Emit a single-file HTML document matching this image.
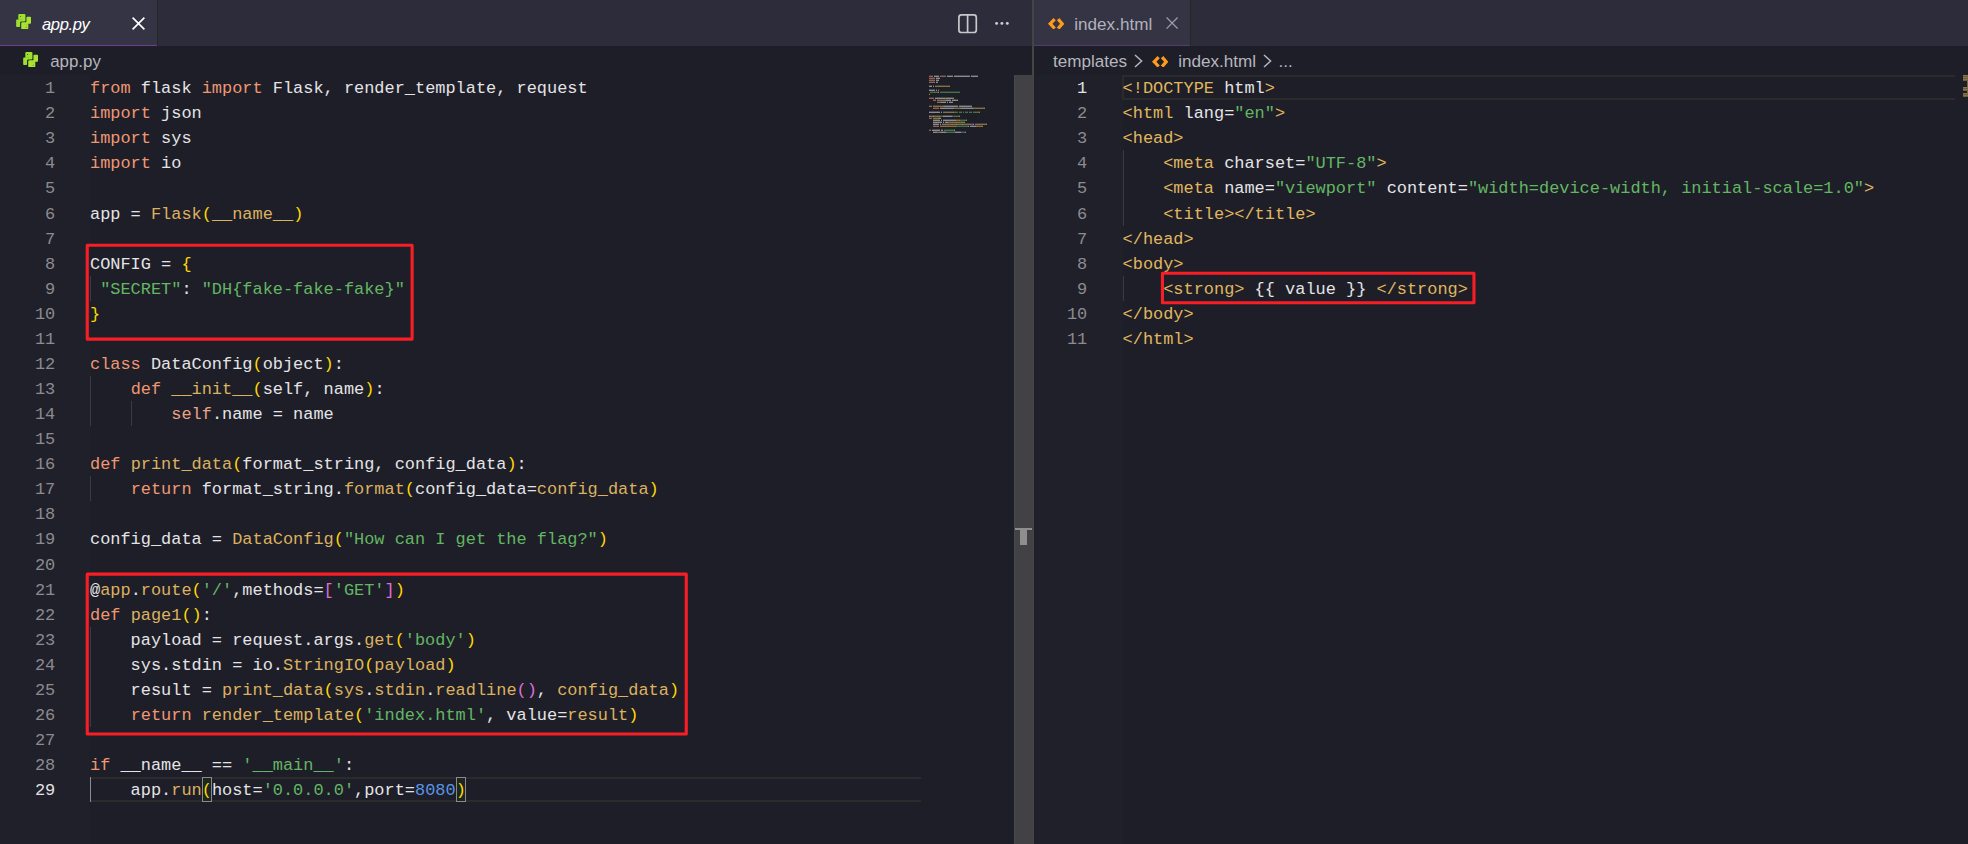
<!DOCTYPE html>
<html lang="en"><head><meta charset="utf-8"><title>editor</title>
<style>
*{margin:0;padding:0;box-sizing:border-box}
html,body{width:1968px;height:844px;overflow:hidden;background:#1e1e28}
body{position:relative;font-family:"Liberation Sans",sans-serif}
.abs{position:absolute}
.cl,.ln{position:absolute;height:25.07px;line-height:25.07px;font-family:"Liberation Mono",monospace;font-size:16.93px;white-space:pre}
.cl{padding-top:1px}
.ln{width:60px;text-align:right;color:#8b8b90;padding-top:1px}
.ln.act{color:#e2e2e4}
.gd{position:absolute;width:1.3px}
.p{color:#e4e4e6}
.k{color:#ee9872}
.f{color:#dcb15f}
.s{color:#63b663}
.n{color:#5a95e3}
.a{color:#ffd700}
.b{color:#da70d6}
.t{color:#e0b75f}
.v{color:#eba287}

.ui{position:absolute;font-size:17.1px;white-space:pre;line-height:20px}
.red{position:absolute;border:3.3px solid #fb1f27}
</style></head>
<body>
<div class="abs" style="left:0;top:0;width:1968px;height:46.2px;background:#2d2c3b"></div>
<div class="abs" style="left:0;top:75.2px;width:90px;height:770px;background:#20202a"></div>
<div class="abs" style="left:1034px;top:75.2px;width:88.6px;height:770px;background:#20202a"></div>
<div class="abs" style="left:0;top:0;width:157px;height:45px;background:#353445"></div>
<div class="abs" style="left:0;top:44.8px;width:157px;height:1.4px;background:#733b96"></div>
<div class="abs" style="left:157px;top:0;width:1.2px;height:46.2px;background:#262629"></div>
<svg class="abs" style="left:15.8px;top:13.8px" width="15.3" height="15.3" viewBox="0 0 460 460"><path d="M100 0H256Q284 0 284 28V198Q284 222 260 222H160Q122 222 122 262V370Q122 392 100 392H30Q5 392 5 367V195Q5 165 35 165H70V30Q70 0 100 0Z M140 61a14 14 0 1 0 0.1 0Z" fill="#9fe02d" fill-rule="evenodd"/><path d="M314 110Q314 85 339 85H425Q455 85 455 115V260Q455 290 425 290H370V425Q370 455 340 455H187Q157 455 157 425V278Q157 248 187 248H288Q314 248 314 222Z M305 381a13 13 0 1 0 0.1 0Z" fill="#a9e52f" fill-rule="evenodd"/><path d="M70 158H195V170H70Z M255 305H370V317H255Z" fill="#7cbf22"/></svg>
<div class="ui" style="left:42px;top:15px;font-style:italic;font-size:16.6px;letter-spacing:-0.4px;color:#ffffff">app.py</div>
<svg class="abs" style="left:132.3px;top:17.2px" width="13" height="13" viewBox="0 0 13 13"><path d="M0.6 0.6 L12.4 12.4 M12.4 0.6 L0.6 12.4" fill="none" stroke="#ffffff" stroke-width="1.6"/></svg>
<svg class="abs" style="left:957px;top:12.7px" width="21" height="21" viewBox="0 0 21 21"><rect x="1.9" y="1.9" width="17.4" height="17.6" rx="2.6" fill="none" stroke="#c8c8cc" stroke-width="1.7"/><path d="M10.6 2 V19.4" stroke="#c8c8cc" stroke-width="1.7"/></svg>
<svg class="abs" style="left:994px;top:21px" width="16" height="5" viewBox="0 0 16 5"><circle cx="2.6" cy="2.4" r="1.45" fill="#d0d0d4"/><circle cx="7.9" cy="2.4" r="1.45" fill="#d0d0d4"/><circle cx="13.3" cy="2.4" r="1.45" fill="#d0d0d4"/></svg>
<svg class="abs" style="left:22.9px;top:52.0px" width="15.3" height="15.3" viewBox="0 0 460 460"><path d="M100 0H256Q284 0 284 28V198Q284 222 260 222H160Q122 222 122 262V370Q122 392 100 392H30Q5 392 5 367V195Q5 165 35 165H70V30Q70 0 100 0Z M140 61a14 14 0 1 0 0.1 0Z" fill="#9fe02d" fill-rule="evenodd"/><path d="M314 110Q314 85 339 85H425Q455 85 455 115V260Q455 290 425 290H370V425Q370 455 340 455H187Q157 455 157 425V278Q157 248 187 248H288Q314 248 314 222Z M305 381a13 13 0 1 0 0.1 0Z" fill="#a9e52f" fill-rule="evenodd"/><path d="M70 158H195V170H70Z M255 305H370V317H255Z" fill="#7cbf22"/></svg>
<div class="ui" style="left:50.2px;top:52.4px;font-size:16.9px;color:#b6b6be">app.py</div>
<div class="abs" style="left:1034px;top:0;width:156px;height:45px;background:#353445"></div>
<div class="abs" style="left:1034px;top:44.8px;width:156px;height:1.4px;background:#573a72"></div>
<div class="abs" style="left:1190px;top:0;width:1.2px;height:46.2px;background:#262629"></div>
<svg class="abs" style="left:1048.0px;top:17.7px" width="16.4" height="11.6" viewBox="0 0 16.4 11.6"><polygon points="0,5.86 5.5,0 7.8,2.13 4.44,5.86 7.8,9.41 5.5,11.55" fill="#ff9b1c"/><polygon points="16.34,5.86 11.37,0 8.88,2.13 12.08,5.86 8.88,9.41 11.37,11.55" fill="#ff9b1c"/></svg>
<div class="ui" style="left:1074.3px;top:14.9px;color:#b2b2ba">index.html</div>
<svg class="abs" style="left:1166px;top:17.4px" width="12.2" height="12.2" viewBox="0 0 13 13"><path d="M0.6 0.6 L12.4 12.4 M12.4 0.6 L0.6 12.4" fill="none" stroke="#9c9ca6" stroke-width="1.4"/></svg>
<div class="ui" style="left:1053px;top:52.4px;color:#b6b6be">templates</div>
<svg class="abs" style="left:1134px;top:54px" width="9" height="14" viewBox="0 0 9 14"><path d="M1 1 L7.6 7 L1 13" fill="none" stroke="#b4b4bc" stroke-width="1.5"/></svg>
<svg class="abs" style="left:1151.6px;top:55.7px" width="16.4" height="11.6" viewBox="0 0 16.4 11.6"><polygon points="0,5.86 5.5,0 7.8,2.13 4.44,5.86 7.8,9.41 5.5,11.55" fill="#ff9b1c"/><polygon points="16.34,5.86 11.37,0 8.88,2.13 12.08,5.86 8.88,9.41 11.37,11.55" fill="#ff9b1c"/></svg>
<div class="ui" style="left:1178.2px;top:52.4px;color:#b6b6be">index.html</div>
<svg class="abs" style="left:1263.4px;top:54px" width="9" height="14" viewBox="0 0 9 14"><path d="M1 1 L7.6 7 L1 13" fill="none" stroke="#b4b4bc" stroke-width="1.5"/></svg>
<div class="ui" style="left:1278.5px;top:52.4px;color:#b6b6be">...</div>
<div class="abs" style="left:90px;top:776.96px;width:831px;height:25.27px;border-top:2px solid #2b2b2c;border-bottom:2px solid #2b2b2c"></div>
<div class="abs" style="left:1122px;top:75.00px;width:833px;height:25.27px;border:2px solid #2b2b2c;border-right:none"></div>
<div class="gd" style="left:90.0px;top:275.76px;height:25.07px;background:#3a3a45"></div>
<div class="gd" style="left:90.0px;top:376.04px;height:50.14px;background:#3a3a45"></div>
<div class="gd" style="left:130.6px;top:401.11px;height:25.07px;background:#3a3a45"></div>
<div class="gd" style="left:90.0px;top:476.32px;height:25.07px;background:#3a3a45"></div>
<div class="gd" style="left:90.0px;top:626.74px;height:100.28px;background:#3a3a45"></div>
<div class="gd" style="left:90.0px;top:777.16px;height:25.07px;background:#8c8c8c"></div>
<div class="gd" style="left:1122.6px;top:150.41px;height:75.21px;background:#3a3a45"></div>
<div class="gd" style="left:1122.6px;top:275.76px;height:25.07px;background:#3a3a45"></div>
<div class="abs" style="left:201.8px;top:776.96px;width:10.4px;height:25.27px;border:1.2px solid #8a8a8a;background:#1c2722"></div>
<div class="abs" style="left:455.8px;top:776.96px;width:10.4px;height:25.27px;border:1.2px solid #8a8a8a;background:#1c2722"></div>
<div class="ln" style="top:75.20px;left:-4.8px">1</div>
<div class="cl" style="top:75.20px;left:90.0px"><span class="k">from</span><span class="p"> flask </span><span class="k">import</span><span class="p"> Flask, render_template, request</span></div>
<div class="ln" style="top:100.27px;left:-4.8px">2</div>
<div class="cl" style="top:100.27px;left:90.0px"><span class="k">import</span><span class="p"> json</span></div>
<div class="ln" style="top:125.34px;left:-4.8px">3</div>
<div class="cl" style="top:125.34px;left:90.0px"><span class="k">import</span><span class="p"> sys</span></div>
<div class="ln" style="top:150.41px;left:-4.8px">4</div>
<div class="cl" style="top:150.41px;left:90.0px"><span class="k">import</span><span class="p"> io</span></div>
<div class="ln" style="top:175.48px;left:-4.8px">5</div>
<div class="ln" style="top:200.55px;left:-4.8px">6</div>
<div class="cl" style="top:200.55px;left:90.0px"><span class="p">app = </span><span class="f">Flask</span><span class="a">(</span><span class="f">__name__</span><span class="a">)</span></div>
<div class="ln" style="top:225.62px;left:-4.8px">7</div>
<div class="ln" style="top:250.69px;left:-4.8px">8</div>
<div class="cl" style="top:250.69px;left:90.0px"><span class="p">CONFIG = </span><span class="a">{</span></div>
<div class="ln" style="top:275.76px;left:-4.8px">9</div>
<div class="cl" style="top:275.76px;left:90.0px"><span class="p"> </span><span class="s">"SECRET"</span><span class="p">: </span><span class="s">"DH{fake-fake-fake}"</span></div>
<div class="ln" style="top:300.83px;left:-4.8px">10</div>
<div class="cl" style="top:300.83px;left:90.0px"><span class="a">}</span></div>
<div class="ln" style="top:325.90px;left:-4.8px">11</div>
<div class="ln" style="top:350.97px;left:-4.8px">12</div>
<div class="cl" style="top:350.97px;left:90.0px"><span class="k">class</span><span class="p"> DataConfig</span><span class="a">(</span><span class="p">object</span><span class="a">)</span><span class="p">:</span></div>
<div class="ln" style="top:376.04px;left:-4.8px">13</div>
<div class="cl" style="top:376.04px;left:90.0px"><span class="p">    </span><span class="k">def</span><span class="p"> </span><span class="f">__init__</span><span class="a">(</span><span class="p">self, name</span><span class="a">)</span><span class="p">:</span></div>
<div class="ln" style="top:401.11px;left:-4.8px">14</div>
<div class="cl" style="top:401.11px;left:90.0px"><span class="p">        </span><span class="v">self</span><span class="p">.name = name</span></div>
<div class="ln" style="top:426.18px;left:-4.8px">15</div>
<div class="ln" style="top:451.25px;left:-4.8px">16</div>
<div class="cl" style="top:451.25px;left:90.0px"><span class="k">def</span><span class="p"> </span><span class="f">print_data</span><span class="a">(</span><span class="p">format_string, config_data</span><span class="a">)</span><span class="p">:</span></div>
<div class="ln" style="top:476.32px;left:-4.8px">17</div>
<div class="cl" style="top:476.32px;left:90.0px"><span class="p">    </span><span class="k">return</span><span class="p"> format_string.</span><span class="f">format</span><span class="a">(</span><span class="p">config_data=</span><span class="f">config_data</span><span class="a">)</span></div>
<div class="ln" style="top:501.39px;left:-4.8px">18</div>
<div class="ln" style="top:526.46px;left:-4.8px">19</div>
<div class="cl" style="top:526.46px;left:90.0px"><span class="p">config_data = </span><span class="f">DataConfig</span><span class="a">(</span><span class="s">"How can I get the flag?"</span><span class="a">)</span></div>
<div class="ln" style="top:551.53px;left:-4.8px">20</div>
<div class="ln" style="top:576.60px;left:-4.8px">21</div>
<div class="cl" style="top:576.60px;left:90.0px"><span class="p">@</span><span class="f">app</span><span class="p">.</span><span class="f">route</span><span class="a">(</span><span class="s">'/'</span><span class="p">,methods=</span><span class="b">[</span><span class="s">'GET'</span><span class="b">]</span><span class="a">)</span></div>
<div class="ln" style="top:601.67px;left:-4.8px">22</div>
<div class="cl" style="top:601.67px;left:90.0px"><span class="k">def</span><span class="p"> </span><span class="f">page1</span><span class="a">()</span><span class="p">:</span></div>
<div class="ln" style="top:626.74px;left:-4.8px">23</div>
<div class="cl" style="top:626.74px;left:90.0px"><span class="p">    payload = request.args.</span><span class="f">get</span><span class="a">(</span><span class="s">'body'</span><span class="a">)</span></div>
<div class="ln" style="top:651.81px;left:-4.8px">24</div>
<div class="cl" style="top:651.81px;left:90.0px"><span class="p">    sys.stdin = io.</span><span class="f">StringIO</span><span class="a">(</span><span class="f">payload</span><span class="a">)</span></div>
<div class="ln" style="top:676.88px;left:-4.8px">25</div>
<div class="cl" style="top:676.88px;left:90.0px"><span class="p">    result = </span><span class="f">print_data</span><span class="a">(</span><span class="f">sys</span><span class="p">.</span><span class="f">stdin</span><span class="p">.</span><span class="f">readline</span><span class="b">()</span><span class="p">, </span><span class="f">config_data</span><span class="a">)</span></div>
<div class="ln" style="top:701.95px;left:-4.8px">26</div>
<div class="cl" style="top:701.95px;left:90.0px"><span class="p">    </span><span class="k">return</span><span class="p"> </span><span class="f">render_template</span><span class="a">(</span><span class="s">'index.html'</span><span class="p">, value=</span><span class="f">result</span><span class="a">)</span></div>
<div class="ln" style="top:727.02px;left:-4.8px">27</div>
<div class="ln" style="top:752.09px;left:-4.8px">28</div>
<div class="cl" style="top:752.09px;left:90.0px"><span class="k">if</span><span class="p"> __name__ == </span><span class="s">'__main__'</span><span class="p">:</span></div>
<div class="ln act" style="top:777.16px;left:-4.8px">29</div>
<div class="cl" style="top:777.16px;left:90.0px"><span class="p">    app.</span><span class="f">run</span><span class="a">(</span><span class="p">host=</span><span class="s">'0.0.0.0'</span><span class="p">,port=</span><span class="n">8080</span><span class="a">)</span></div>
<div class="ln act" style="top:75.20px;left:1027.2px">1</div>
<div class="cl" style="top:75.20px;left:1122.6px"><span class="t">&lt;!DOCTYPE</span><span class="p"> html</span><span class="t">&gt;</span></div>
<div class="ln" style="top:100.27px;left:1027.2px">2</div>
<div class="cl" style="top:100.27px;left:1122.6px"><span class="t">&lt;html</span><span class="p"> lang=</span><span class="s">"en"</span><span class="t">&gt;</span></div>
<div class="ln" style="top:125.34px;left:1027.2px">3</div>
<div class="cl" style="top:125.34px;left:1122.6px"><span class="t">&lt;head&gt;</span></div>
<div class="ln" style="top:150.41px;left:1027.2px">4</div>
<div class="cl" style="top:150.41px;left:1122.6px"><span class="p">    </span><span class="t">&lt;meta</span><span class="p"> charset=</span><span class="s">"UTF-8"</span><span class="t">&gt;</span></div>
<div class="ln" style="top:175.48px;left:1027.2px">5</div>
<div class="cl" style="top:175.48px;left:1122.6px"><span class="p">    </span><span class="t">&lt;meta</span><span class="p"> name=</span><span class="s">"viewport"</span><span class="p"> content=</span><span class="s">"width=device-width, initial-scale=1.0"</span><span class="t">&gt;</span></div>
<div class="ln" style="top:200.55px;left:1027.2px">6</div>
<div class="cl" style="top:200.55px;left:1122.6px"><span class="p">    </span><span class="t">&lt;title&gt;&lt;/title&gt;</span></div>
<div class="ln" style="top:225.62px;left:1027.2px">7</div>
<div class="cl" style="top:225.62px;left:1122.6px"><span class="t">&lt;/head&gt;</span></div>
<div class="ln" style="top:250.69px;left:1027.2px">8</div>
<div class="cl" style="top:250.69px;left:1122.6px"><span class="t">&lt;body&gt;</span></div>
<div class="ln" style="top:275.76px;left:1027.2px">9</div>
<div class="cl" style="top:275.76px;left:1122.6px"><span class="p">    </span><span class="t">&lt;strong&gt;</span><span class="p"> {{ value }} </span><span class="t">&lt;/strong&gt;</span></div>
<div class="ln" style="top:300.83px;left:1027.2px">10</div>
<div class="cl" style="top:300.83px;left:1122.6px"><span class="t">&lt;/body&gt;</span></div>
<div class="ln" style="top:325.90px;left:1027.2px">11</div>
<div class="cl" style="top:325.90px;left:1122.6px"><span class="t">&lt;/html&gt;</span></div>
<svg class="abs" style="left:0;top:0" width="1968" height="844" viewBox="0 0 1968 844"><g opacity="0.55"><rect x="929" y="75.6" width="4" height="1.4" fill="#ee9872"/><rect x="934" y="75.6" width="5" height="1.4" fill="#e4e4e6"/><rect x="940" y="75.6" width="6" height="1.4" fill="#ee9872"/><rect x="947" y="75.6" width="6" height="1.4" fill="#e4e4e6"/><rect x="954" y="75.6" width="16" height="1.4" fill="#e4e4e6"/><rect x="971" y="75.6" width="7" height="1.4" fill="#e4e4e6"/><rect x="929" y="77.6" width="6" height="1.4" fill="#ee9872"/><rect x="936" y="77.6" width="4" height="1.4" fill="#e4e4e6"/><rect x="929" y="79.6" width="6" height="1.4" fill="#ee9872"/><rect x="936" y="79.6" width="3" height="1.4" fill="#e4e4e6"/><rect x="929" y="81.6" width="6" height="1.4" fill="#ee9872"/><rect x="936" y="81.6" width="2" height="1.4" fill="#e4e4e6"/><rect x="929" y="85.6" width="3" height="1.4" fill="#e4e4e6"/><rect x="933" y="85.6" width="1" height="1.4" fill="#e4e4e6"/><rect x="935" y="85.6" width="5" height="1.4" fill="#dcb15f"/><rect x="940" y="85.6" width="1" height="1.4" fill="#ffd700"/><rect x="941" y="85.6" width="8" height="1.4" fill="#dcb15f"/><rect x="949" y="85.6" width="1" height="1.4" fill="#ffd700"/><rect x="929" y="89.6" width="6" height="1.4" fill="#e4e4e6"/><rect x="936" y="89.6" width="1" height="1.4" fill="#e4e4e6"/><rect x="938" y="89.6" width="1" height="1.4" fill="#ffd700"/><rect x="930" y="91.6" width="8" height="1.4" fill="#63b663"/><rect x="938" y="91.6" width="1" height="1.4" fill="#e4e4e6"/><rect x="940" y="91.6" width="20" height="1.4" fill="#63b663"/><rect x="929" y="93.6" width="1" height="1.4" fill="#ffd700"/><rect x="929" y="97.6" width="5" height="1.4" fill="#ee9872"/><rect x="935" y="97.6" width="10" height="1.4" fill="#e4e4e6"/><rect x="945" y="97.6" width="1" height="1.4" fill="#ffd700"/><rect x="946" y="97.6" width="6" height="1.4" fill="#e4e4e6"/><rect x="952" y="97.6" width="1" height="1.4" fill="#ffd700"/><rect x="953" y="97.6" width="1" height="1.4" fill="#e4e4e6"/><rect x="933" y="99.6" width="3" height="1.4" fill="#ee9872"/><rect x="937" y="99.6" width="8" height="1.4" fill="#dcb15f"/><rect x="945" y="99.6" width="1" height="1.4" fill="#ffd700"/><rect x="946" y="99.6" width="5" height="1.4" fill="#e4e4e6"/><rect x="952" y="99.6" width="4" height="1.4" fill="#e4e4e6"/><rect x="956" y="99.6" width="1" height="1.4" fill="#ffd700"/><rect x="957" y="99.6" width="1" height="1.4" fill="#e4e4e6"/><rect x="937" y="101.6" width="4" height="1.4" fill="#eba287"/><rect x="941" y="101.6" width="5" height="1.4" fill="#e4e4e6"/><rect x="947" y="101.6" width="1" height="1.4" fill="#e4e4e6"/><rect x="949" y="101.6" width="4" height="1.4" fill="#e4e4e6"/><rect x="929" y="105.6" width="3" height="1.4" fill="#ee9872"/><rect x="933" y="105.6" width="10" height="1.4" fill="#dcb15f"/><rect x="943" y="105.6" width="1" height="1.4" fill="#ffd700"/><rect x="944" y="105.6" width="14" height="1.4" fill="#e4e4e6"/><rect x="959" y="105.6" width="11" height="1.4" fill="#e4e4e6"/><rect x="970" y="105.6" width="1" height="1.4" fill="#ffd700"/><rect x="971" y="105.6" width="1" height="1.4" fill="#e4e4e6"/><rect x="933" y="107.6" width="6" height="1.4" fill="#ee9872"/><rect x="940" y="107.6" width="14" height="1.4" fill="#e4e4e6"/><rect x="954" y="107.6" width="6" height="1.4" fill="#dcb15f"/><rect x="960" y="107.6" width="1" height="1.4" fill="#ffd700"/><rect x="961" y="107.6" width="12" height="1.4" fill="#e4e4e6"/><rect x="973" y="107.6" width="11" height="1.4" fill="#dcb15f"/><rect x="984" y="107.6" width="1" height="1.4" fill="#ffd700"/><rect x="929" y="111.6" width="11" height="1.4" fill="#e4e4e6"/><rect x="941" y="111.6" width="1" height="1.4" fill="#e4e4e6"/><rect x="943" y="111.6" width="10" height="1.4" fill="#dcb15f"/><rect x="953" y="111.6" width="1" height="1.4" fill="#ffd700"/><rect x="954" y="111.6" width="4" height="1.4" fill="#63b663"/><rect x="959" y="111.6" width="3" height="1.4" fill="#63b663"/><rect x="963" y="111.6" width="1" height="1.4" fill="#63b663"/><rect x="965" y="111.6" width="3" height="1.4" fill="#63b663"/><rect x="969" y="111.6" width="3" height="1.4" fill="#63b663"/><rect x="973" y="111.6" width="6" height="1.4" fill="#63b663"/><rect x="979" y="111.6" width="1" height="1.4" fill="#ffd700"/><rect x="929" y="115.6" width="1" height="1.4" fill="#e4e4e6"/><rect x="930" y="115.6" width="3" height="1.4" fill="#dcb15f"/><rect x="933" y="115.6" width="1" height="1.4" fill="#e4e4e6"/><rect x="934" y="115.6" width="5" height="1.4" fill="#dcb15f"/><rect x="939" y="115.6" width="1" height="1.4" fill="#ffd700"/><rect x="940" y="115.6" width="3" height="1.4" fill="#63b663"/><rect x="943" y="115.6" width="9" height="1.4" fill="#e4e4e6"/><rect x="952" y="115.6" width="1" height="1.4" fill="#da70d6"/><rect x="953" y="115.6" width="5" height="1.4" fill="#63b663"/><rect x="958" y="115.6" width="1" height="1.4" fill="#da70d6"/><rect x="959" y="115.6" width="1" height="1.4" fill="#ffd700"/><rect x="929" y="117.6" width="3" height="1.4" fill="#ee9872"/><rect x="933" y="117.6" width="5" height="1.4" fill="#dcb15f"/><rect x="938" y="117.6" width="2" height="1.4" fill="#ffd700"/><rect x="940" y="117.6" width="1" height="1.4" fill="#e4e4e6"/><rect x="933" y="119.6" width="7" height="1.4" fill="#e4e4e6"/><rect x="941" y="119.6" width="1" height="1.4" fill="#e4e4e6"/><rect x="943" y="119.6" width="13" height="1.4" fill="#e4e4e6"/><rect x="956" y="119.6" width="3" height="1.4" fill="#dcb15f"/><rect x="959" y="119.6" width="1" height="1.4" fill="#ffd700"/><rect x="960" y="119.6" width="6" height="1.4" fill="#63b663"/><rect x="966" y="119.6" width="1" height="1.4" fill="#ffd700"/><rect x="933" y="121.6" width="9" height="1.4" fill="#e4e4e6"/><rect x="943" y="121.6" width="1" height="1.4" fill="#e4e4e6"/><rect x="945" y="121.6" width="3" height="1.4" fill="#e4e4e6"/><rect x="948" y="121.6" width="8" height="1.4" fill="#dcb15f"/><rect x="956" y="121.6" width="1" height="1.4" fill="#ffd700"/><rect x="957" y="121.6" width="7" height="1.4" fill="#dcb15f"/><rect x="964" y="121.6" width="1" height="1.4" fill="#ffd700"/><rect x="933" y="123.6" width="6" height="1.4" fill="#e4e4e6"/><rect x="940" y="123.6" width="1" height="1.4" fill="#e4e4e6"/><rect x="942" y="123.6" width="10" height="1.4" fill="#dcb15f"/><rect x="952" y="123.6" width="1" height="1.4" fill="#ffd700"/><rect x="953" y="123.6" width="3" height="1.4" fill="#dcb15f"/><rect x="956" y="123.6" width="1" height="1.4" fill="#e4e4e6"/><rect x="957" y="123.6" width="5" height="1.4" fill="#dcb15f"/><rect x="962" y="123.6" width="1" height="1.4" fill="#e4e4e6"/><rect x="963" y="123.6" width="8" height="1.4" fill="#dcb15f"/><rect x="971" y="123.6" width="2" height="1.4" fill="#da70d6"/><rect x="973" y="123.6" width="1" height="1.4" fill="#e4e4e6"/><rect x="975" y="123.6" width="11" height="1.4" fill="#dcb15f"/><rect x="986" y="123.6" width="1" height="1.4" fill="#ffd700"/><rect x="933" y="125.6" width="6" height="1.4" fill="#ee9872"/><rect x="940" y="125.6" width="15" height="1.4" fill="#dcb15f"/><rect x="955" y="125.6" width="1" height="1.4" fill="#ffd700"/><rect x="956" y="125.6" width="12" height="1.4" fill="#63b663"/><rect x="968" y="125.6" width="1" height="1.4" fill="#e4e4e6"/><rect x="970" y="125.6" width="6" height="1.4" fill="#e4e4e6"/><rect x="976" y="125.6" width="6" height="1.4" fill="#dcb15f"/><rect x="982" y="125.6" width="1" height="1.4" fill="#ffd700"/><rect x="929" y="129.6" width="2" height="1.4" fill="#ee9872"/><rect x="932" y="129.6" width="8" height="1.4" fill="#e4e4e6"/><rect x="941" y="129.6" width="2" height="1.4" fill="#e4e4e6"/><rect x="944" y="129.6" width="10" height="1.4" fill="#63b663"/><rect x="954" y="129.6" width="1" height="1.4" fill="#e4e4e6"/><rect x="933" y="131.6" width="4" height="1.4" fill="#e4e4e6"/><rect x="937" y="131.6" width="3" height="1.4" fill="#dcb15f"/><rect x="940" y="131.6" width="1" height="1.4" fill="#ffd700"/><rect x="941" y="131.6" width="5" height="1.4" fill="#e4e4e6"/><rect x="946" y="131.6" width="9" height="1.4" fill="#63b663"/><rect x="955" y="131.6" width="6" height="1.4" fill="#e4e4e6"/><rect x="961" y="131.6" width="4" height="1.4" fill="#5a95e3"/><rect x="965" y="131.6" width="1" height="1.4" fill="#ffd700"/></g><g opacity="0.7"><rect x="1963" y="75.2" width="9" height="1.4" fill="#e0b75f"/><rect x="1973" y="75.2" width="4" height="1.4" fill="#e4e4e6"/><rect x="1977" y="75.2" width="1" height="1.4" fill="#e0b75f"/><rect x="1963" y="77.2" width="5" height="1.4" fill="#e0b75f"/><rect x="1969" y="77.2" width="5" height="1.4" fill="#e4e4e6"/><rect x="1974" y="77.2" width="4" height="1.4" fill="#63b663"/><rect x="1978" y="77.2" width="1" height="1.4" fill="#e0b75f"/><rect x="1963" y="79.2" width="6" height="1.4" fill="#e0b75f"/><rect x="1967" y="81.2" width="5" height="1.4" fill="#e0b75f"/><rect x="1973" y="81.2" width="8" height="1.4" fill="#e4e4e6"/><rect x="1981" y="81.2" width="7" height="1.4" fill="#63b663"/><rect x="1988" y="81.2" width="1" height="1.4" fill="#e0b75f"/><rect x="1967" y="83.2" width="5" height="1.4" fill="#e0b75f"/><rect x="1973" y="83.2" width="5" height="1.4" fill="#e4e4e6"/><rect x="1978" y="83.2" width="10" height="1.4" fill="#63b663"/><rect x="1989" y="83.2" width="8" height="1.4" fill="#e4e4e6"/><rect x="1997" y="83.2" width="20" height="1.4" fill="#63b663"/><rect x="2018" y="83.2" width="18" height="1.4" fill="#63b663"/><rect x="2036" y="83.2" width="1" height="1.4" fill="#e0b75f"/><rect x="1967" y="85.2" width="15" height="1.4" fill="#e0b75f"/><rect x="1963" y="87.2" width="7" height="1.4" fill="#e0b75f"/><rect x="1963" y="89.2" width="6" height="1.4" fill="#e0b75f"/><rect x="1967" y="91.2" width="8" height="1.4" fill="#e0b75f"/><rect x="1976" y="91.2" width="2" height="1.4" fill="#e4e4e6"/><rect x="1979" y="91.2" width="5" height="1.4" fill="#e4e4e6"/><rect x="1985" y="91.2" width="2" height="1.4" fill="#e4e4e6"/><rect x="1988" y="91.2" width="9" height="1.4" fill="#e0b75f"/><rect x="1963" y="93.2" width="7" height="1.4" fill="#e0b75f"/><rect x="1963" y="95.2" width="7" height="1.4" fill="#e0b75f"/></g></svg>
<div class="abs" style="left:1014px;top:75.2px;width:18.4px;height:770px;background:#414146;border-left:1px solid #48484d"></div>
<div class="abs" style="left:1032px;top:0;width:2px;height:844px;background:#454443"></div>
<div class="abs" style="left:1015px;top:528px;width:17px;height:2px;background:#8e8e8e"></div>
<div class="abs" style="left:1020px;top:528px;width:7px;height:17px;background:#8e8e8e"></div>
<svg class="abs" style="left:0;top:0" width="1968" height="844" viewBox="0 0 1968 844"><rect x="87.25" y="245.3" width="324.85" height="93.80" fill="none" stroke="#f91e26" stroke-width="3.1" stroke-linejoin="round"/><rect x="87.25" y="574.15" width="599.00" height="159.80" fill="none" stroke="#f91e26" stroke-width="3.1" stroke-linejoin="round"/><rect x="1162.45" y="273.25" width="311.50" height="29.50" fill="none" stroke="#f91e26" stroke-width="3.1" stroke-linejoin="round"/></svg>
</body></html>
